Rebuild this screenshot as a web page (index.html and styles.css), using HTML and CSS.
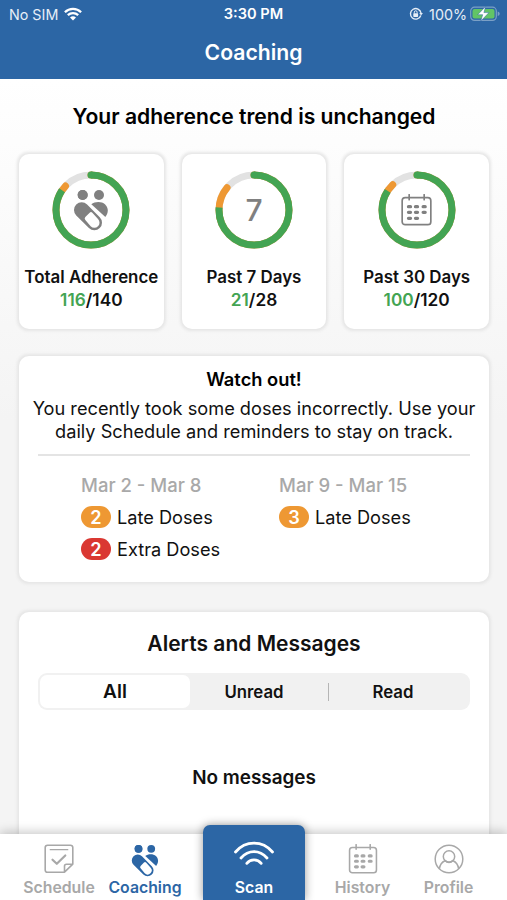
FILE: index.html
```
<!DOCTYPE html>
<html lang="en">
<head>
  <meta charset="UTF-8">
  <meta name="viewport" content="width=device-width, initial-scale=1.0">
  <title>Coaching</title>
  <link rel="stylesheet" href="styles.css">
</head>
<body>

<!-- shared icons -->
<svg class="sprite" width="0" height="0">
  <symbol id="icon-people" viewBox="0 0 108 126">
    <circle cx="29" cy="18" r="15" fill="currentColor"/>
    <circle cx="78" cy="18" r="15" fill="currentColor"/>
    <path d="M55 46C66 37 86 37 96 46C107 57 107 71 97 84Z" fill="currentColor"/>
    <path d="M26 63L64 101" stroke="#fff" stroke-width="54" stroke-linecap="round"/>
    <circle cx="29" cy="18" r="15" fill="currentColor"/>
    <path d="M26 63L64 101" stroke="currentColor" stroke-width="46" stroke-linecap="round"/>
    <path d="M37 93Q33 89 37 84L50 71Q54 67 58 71L75 90A15.500 15.500 0 0 1 53 112Z" fill="#fff"/>
  </symbol>
  <symbol id="icon-calendar" viewBox="0 0 92 96">
    <rect x="3" y="11" width="86" height="81" rx="9" fill="none" stroke="currentColor" stroke-width="5"/>
    <path d="M24 2v15M69 2v15" stroke="currentColor" stroke-width="5" stroke-linecap="round"/>
    <path d="M22 38h6M43 38h6M66 38h6M22 55h6M43 55h6M66 55h6M22 73h6M43 73h6" stroke="currentColor" stroke-width="10" stroke-linecap="round"/>
  </symbol>
</svg>

<div class="phone">
  <header class="header">
    <div class="status">
      <div class="status-left">
        <span>No SIM</span>
        <svg width="18" height="14" viewBox="0 0 18 14" fill="none" stroke="#fff" stroke-width="2.300">
          <path d="M.9 5.200C5.500.7 12.500.7 17.100 5.200"/>
          <path d="M3.800 8.200C6.800 5.300 11.200 5.300 14.200 8.200"/>
          <path d="M9 13.500L6 10.600Q9 8 12 10.600Z" fill="#fff" stroke="none"/>
        </svg>
      </div>
      <div class="status-time">3:30 PM</div>
      <div class="status-right">
        <svg class="lock" width="14" height="14" viewBox="0 0 14 14" fill="none" stroke="#e6eef7" stroke-width="1.400">
          <path d="M11.800 8.500A5.300 5.300 0 1 1 12 6"/>
          <path d="M10.300 6h3.600L12.100 8.600Z" fill="#e6eef7" stroke="none"/>
          <rect x="4.300" y="6.300" width="4.800" height="3.600" rx=".6" fill="#e6eef7" stroke="none"/>
          <path d="M5.300 6.500V5.200a1.400 1.400 0 0 1 2.800 0v1.300" stroke-width="1"/>
        </svg>
        <span>100%</span>
        <svg class="battery" width="30" height="16" viewBox="0 0 30 16">
          <rect x=".7" y="1.200" width="25.600" height="13.200" rx="3.800" fill="none" stroke="#7ba0c6" stroke-width="1.200"/>
          <rect x="2.500" y="3" width="22" height="9.600" rx="2" fill="#62c466"/>
          <path d="M27.700 5.500q2 .6 2 2.300t-2 2.300Z" fill="#7ba0c6"/>
          <path d="M15.600.5L7.700 8.700H12.700L10.800 15L19 6.600H13.900Z" fill="#fff" stroke="#2c66a5" stroke-width=".5"/>
        </svg>
      </div>
    </div>
    <h1>Coaching</h1>
  </header>

  <main class="content">
    <h2 class="trend">Your adherence trend is unchanged</h2>

    <div class="stats">
      <div class="card stat">
        <div class="ring">
          <svg viewBox="0 0 78 78">
            <circle class="track" cx="39" cy="39" r="35"/>
            <circle class="late" cx="39" cy="39" r="35" pathLength="100" stroke-dasharray="87 100"/>
            <circle class="taken" cx="39" cy="39" r="35" pathLength="100" stroke-dasharray="84.500 100"/>
            <circle class="start" cx="39" cy="4" r="3.500"/>
          </svg>
          <svg class="ring-people"><use href="#icon-people"/></svg>
        </div>
        <div class="stat-name">Total Adherence</div>
        <div class="stat-count"><span>116</span>/140</div>
      </div>
      <div class="card stat">
        <div class="ring">
          <svg viewBox="0 0 78 78">
            <circle class="track" cx="39" cy="39" r="35"/>
            <circle class="late" cx="39" cy="39" r="35" pathLength="100" stroke-dasharray="86 100"/>
            <circle class="taken" cx="39" cy="39" r="35" pathLength="100" stroke-dasharray="76.200 100"/>
            <circle class="start" cx="39" cy="4" r="3.500"/>
          </svg>
          <span class="ring-number">7</span>
        </div>
        <div class="stat-name">Past 7 Days</div>
        <div class="stat-count"><span>21</span>/28</div>
      </div>
      <div class="card stat">
        <div class="ring">
          <svg viewBox="0 0 78 78">
            <circle class="track" cx="39" cy="39" r="35"/>
            <circle class="late" cx="39" cy="39" r="35" pathLength="100" stroke-dasharray="87.800 100"/>
            <circle class="taken" cx="39" cy="39" r="35" pathLength="100" stroke-dasharray="84.200 100"/>
            <circle class="start" cx="39" cy="4" r="3.500"/>
          </svg>
          <svg class="ring-calendar"><use href="#icon-calendar"/></svg>
        </div>
        <div class="stat-name">Past 30 Days</div>
        <div class="stat-count"><span>100</span>/120</div>
      </div>
    </div>

    <section class="card watch">
      <h3>Watch out!</h3>
      <p>You recently took some doses incorrectly. Use your<br>daily Schedule and reminders to stay on track.</p>
      <div class="weeks">
        <div class="week">
          <div class="week-dates">Mar 2 - Mar 8</div>
          <div class="dose"><span class="badge">2</span>Late Doses</div>
          <div class="dose"><span class="badge badge-extra">2</span>Extra Doses</div>
        </div>
        <div class="week">
          <div class="week-dates">Mar 9 - Mar 15</div>
          <div class="dose"><span class="badge">3</span>Late Doses</div>
        </div>
      </div>
    </section>

    <section class="card alerts">
      <h2>Alerts and Messages</h2>
      <div class="tabs">
        <button class="tab active">All</button>
        <button class="tab">Unread</button>
        <button class="tab last">Read</button>
      </div>
      <div class="empty">No messages</div>
    </section>
  </main>

  <nav class="nav">
    <a class="nav-item">
      <svg width="30" height="30" viewBox="0 0 30 30" fill="none" stroke="currentColor" stroke-width="1.600" stroke-linecap="round" stroke-linejoin="round">
        <path d="M20.500 28.200H3.500A2.300 2.300 0 0 1 1.200 25.900V3.500A2.300 2.300 0 0 1 3.500 1.200H26.500A2.300 2.300 0 0 1 28.800 3.500V20.200L20.500 28.200V22.200A2 2 0 0 1 22.500 20.200H28.800"/>
        <path d="M6.200 5.700H23.800" stroke-width="1.200"/>
        <path d="M8.500 15.700L12.800 19.800L21.300 11.500" stroke-width="2.200"/>
      </svg>
      <span>Schedule</span>
    </a>
    <a class="nav-item current">
      <svg class="nav-people"><use href="#icon-people"/></svg>
      <span>Coaching</span>
    </a>
    <a class="nav-item scan">
      <svg width="42" height="26" viewBox="0 0 42 26" fill="none" stroke="#fff" stroke-width="2.800" stroke-linecap="round">
        <path d="M2.500 11C12.500-.8 29.500-.8 39.500 11"/>
        <path d="M8 17C15.500 8.500 26.500 8.500 34 17"/>
        <path d="M13.800 22.300C17.500 17.800 24.500 17.800 28.200 22.300"/>
      </svg>
      <span>Scan</span>
    </a>
    <a class="nav-item">
      <svg width="30" height="30"><use href="#icon-calendar"/></svg>
      <span>History</span>
    </a>
    <a class="nav-item">
      <svg width="30" height="30" viewBox="0 0 30 30" fill="none" stroke="currentColor" stroke-width="1.500">
        <circle cx="15" cy="15" r="13.800"/>
        <circle cx="15" cy="12.500" r="5.700"/>
        <path d="M5.300 24.800C6 20.500 8 18 11 16.700Q15 20 19 16.700C22 18 24 20.500 24.700 24.800"/>
      </svg>
      <span>Profile</span>
    </a>
  </nav>
</div>

</body>
</html>
```
FILE: styles.css
```
* {
  box-sizing: border-box;
}

body {
  margin: 0;
  font-family: Inter, "Liberation Sans", sans-serif;
  color: #111;
}

h1, h2, h3, p {
  margin: 0;
  font-weight: 600;
}

.sprite {
  position: absolute;
}

.phone {
  width: 507px;
  height: 900px;
  display: flex;
  flex-direction: column;
  overflow: hidden;
  background: linear-gradient(#fff 79px, #f4f4f4 420px);
}

/* header */
.header {
  height: 79px;
  background: #2c66a5;
  color: #fff;
  text-align: center;
}

.status {
  display: grid;
  grid-template-columns: 1fr auto 1fr;
  align-items: center;
  height: 28px;
  padding: 0 7px;
  font-size: 14.3px;
  color: #e6eef7;
}

.status-left,
.status-right {
  display: flex;
  align-items: center;
  gap: 6px;
  padding-left: 2px;
}

.status-right {
  justify-content: flex-end;
  gap: 3px;
}

.lock {
  margin-right: 3px;
}

.status-time {
  font-size: 14.6px;
  font-weight: 600;
  color: #fff;
}

.header h1 {
  font-size: 21.2px;
  line-height: 48px;
}

/* content */
.content {
  flex: 1;
  min-height: 0;
  overflow: hidden;
  padding: 0 18px 0 19px;
}

.trend {
  font-size: 21.1px;
  line-height: 75px;
  text-align: center;
  color: #000;
}

.card {
  background: #fff;
  border-radius: 10px;
  box-shadow: 0 0 3px 1.5px #e6e6e6;
}

.stats {
  display: grid;
  grid-template-columns: repeat(3, 1fr);
  gap: 18px;
}

.stat {
  height: 175px;
  padding-top: 17px;
  text-align: center;
  white-space: nowrap;
}

.ring {
  display: grid;
  place-items: center;
  width: 78px;
  height: 78px;
  margin: 0 auto 17px;
  color: #808080;
}

.ring > * {
  grid-area: 1 / 1;
}

.ring .track,
.ring .late,
.ring .taken {
  fill: none;
  stroke-width: 7;
  transform: rotate(-90deg);
  transform-origin: center;
}

.ring .track {
  stroke: #e2e2e2;
}

.ring .late {
  stroke: #ee9833;
  stroke-linecap: round;
}

.ring .taken {
  stroke: #43a453;
}

.ring .start {
  fill: #43a453;
}

.ring-people {
  width: 36px;
  height: 42px;
}

.ring-calendar {
  width: 31px;
  height: 32px;
}

.ring-number {
  font-size: 30px;
  font-weight: 500;
}

.stat-name,
.stat-count {
  font-size: 16.9px;
  line-height: 23px;
  font-weight: 600;
}

.stat-count {
  font-size: 17.3px;
  line-height: 22px;
}

.stat-count span {
  color: #43a453;
}

.watch {
  height: 226px;
  margin-top: 27px;
  padding: 11px 19px 0;
  text-align: center;
}

.watch h3 {
  font-size: 18.3px;
  line-height: 24px;
  color: #000;
}

.watch p {
  margin: 6px -10px 11px;
  font-size: 18.2px;
  line-height: 23px;
  font-weight: 400;
}

.weeks {
  display: flex;
  border-top: 2px solid #e4e4e4;
  padding: 17px 0 0 43px;
  text-align: left;
}

.week {
  flex: 0 0 198px;
}

.week-dates {
  margin-bottom: 4px;
  font-size: 18.5px;
  line-height: 24px;
  font-weight: 500;
  color: #a9a9a9;
}

.dose {
  display: flex;
  align-items: center;
  gap: 6px;
  height: 32px;
  font-size: 18.2px;
}

.badge {
  width: 30px;
  height: 22px;
  border-radius: 11px;
  background: #ee9833;
  color: #fff;
  font-weight: 600;
  line-height: 22px;
  text-align: center;
}

.badge-extra {
  background: #da3832;
}

.alerts {
  height: 300px;
  margin-top: 30px;
  padding: 18px 19px 0;
  text-align: center;
}

.alerts h2 {
  font-size: 21px;
  line-height: 28px;
}

.tabs {
  display: flex;
  height: 37px;
  margin-top: 15px;
  padding: 2px;
  border-radius: 9px;
  background: #f1f1f1;
}

.tab {
  position: relative;
  width: 128px;
  padding: 0;
  border: none;
  border-radius: 7px;
  background: none;
  font-family: inherit;
  font-size: 16.8px;
  font-weight: 600;
  color: #111;
}

.tab.active {
  width: 150px;
  background: #fff;
  font-size: 19px;
}

.tab.last {
  flex: 1;
}

.tab.last::before {
  content: "";
  position: absolute;
  left: 10px;
  top: 8px;
  width: 1px;
  height: 18px;
  background: #b5b5b5;
}

.empty {
  margin-top: 56px;
  font-size: 18.9px;
  line-height: 24px;
  font-weight: 600;
}

/* bottom nav */
.nav {
  position: relative;
  display: grid;
  grid-template-columns: 94px 78px 140px 77px 95px;
  height: 66px;
  padding-left: 12px;
  background: #fff;
  box-shadow: 0 -2px 10px rgba(0, 0, 0, 0.22);
}

.nav-item {
  display: flex;
  flex-direction: column;
  align-items: center;
  padding-top: 10px;
  font-size: 15.8px;
  line-height: 20px;
  font-weight: 600;
  color: #a8a8a8;
}

.nav-item span {
  margin-top: auto;
  padding-bottom: 2px;
}

.nav-item.current {
  color: #2c66a5;
}

.nav-people {
  width: 28px;
  height: 33px;
}

.nav-item.scan {
  width: 102px;
  margin: -9px auto 0;
  padding-top: 16px;
  border-radius: 7px 7px 0 0;
  background: #2c66a5;
  box-shadow: 0 0 10px rgba(0, 0, 0, 0.4);
  color: #fff;
}
```
